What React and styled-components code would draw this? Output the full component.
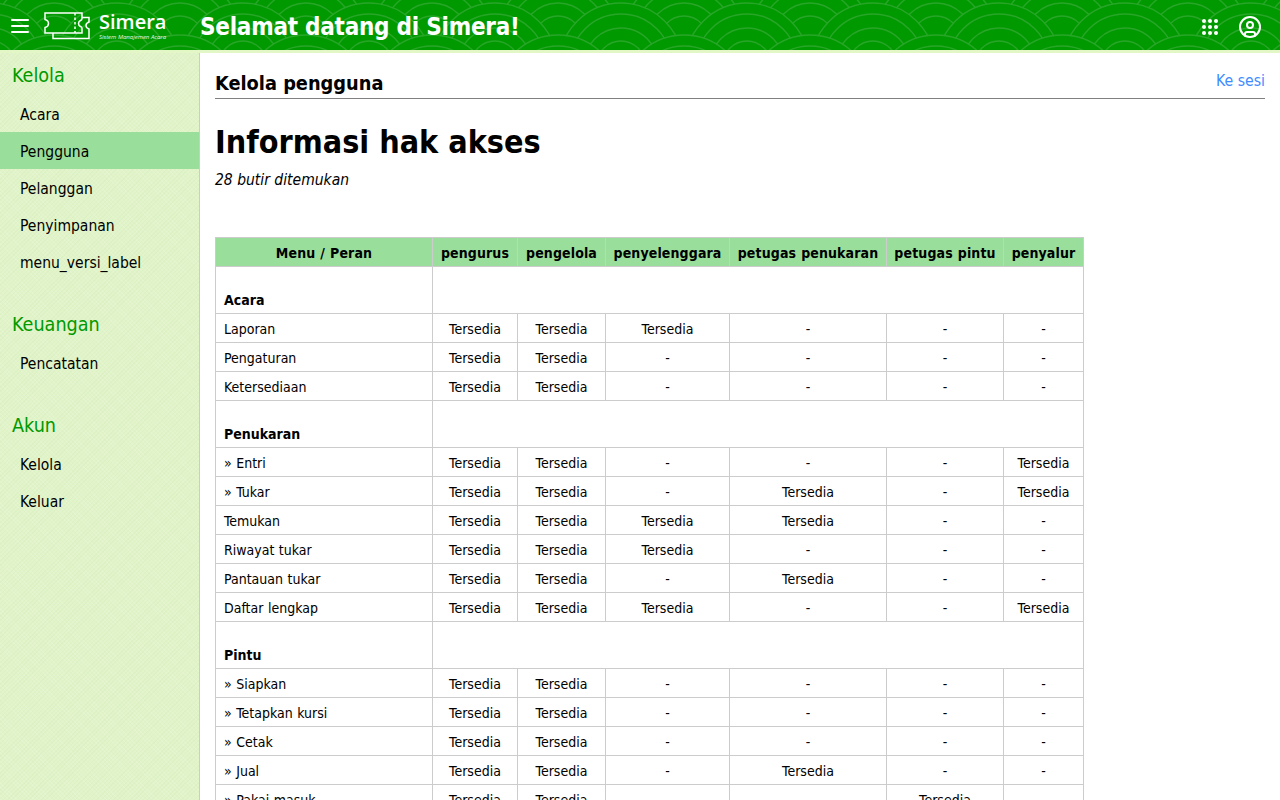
import styled, { createGlobalStyle } from "styled-components";
import { LuMenu, LuCircleUser } from "react-icons/lu";

const GlobalStyle = createGlobalStyle`
  html, body { margin: 0; padding: 0; height: 100%; overflow: hidden; background: #fff; }
  body {
    font-family: "DejaVu Sans Condensed", "DejaVu Sans", sans-serif;
    font-stretch: condensed;
    font-size: 14px;
    color: #000;
  }
`;

const sidebarMenu = [
  { title: "Kelola", items: ["Acara", "Pengguna", "Pelanggan", "Penyimpanan", "menu_versi_label"] },
  { title: "Keuangan", items: ["Pencatatan"] },
  { title: "Akun", items: ["Kelola", "Keluar"] },
];

const columns = [
  { label: "Menu / Peran", width: 217 },
  { label: "pengurus", width: 85 },
  { label: "pengelola", width: 88 },
  { label: "penyelenggara", width: 124 },
  { label: "petugas penukaran", width: 157 },
  { label: "petugas pintu", width: 117 },
  { label: "penyalur", width: 80 },
];

const T = "Tersedia";
const rows = [
  { group: "Acara" },
  { name: "Laporan", v: [T, T, T, "-", "-", "-"] },
  { name: "Pengaturan", v: [T, T, "-", "-", "-", "-"] },
  { name: "Ketersediaan", v: [T, T, "-", "-", "-", "-"] },
  { group: "Penukaran" },
  { name: "» Entri", v: [T, T, "-", "-", "-", T] },
  { name: "» Tukar", v: [T, T, "-", T, "-", T] },
  { name: "Temukan", v: [T, T, T, T, "-", "-"] },
  { name: "Riwayat tukar", v: [T, T, T, "-", "-", "-"] },
  { name: "Pantauan tukar", v: [T, T, "-", T, "-", "-"] },
  { name: "Daftar lengkap", v: [T, T, T, "-", "-", T] },
  { group: "Pintu" },
  { name: "» Siapkan", v: [T, T, "-", "-", "-", "-"] },
  { name: "» Tetapkan kursi", v: [T, T, "-", "-", "-", "-"] },
  { name: "» Cetak", v: [T, T, "-", "-", "-", "-"] },
  { name: "» Jual", v: [T, T, "-", T, "-", "-"] },
  { name: "» Pakai masuk", v: [T, T, "-", "-", T, "-"] },
];

// scale rows of the header pattern, back to front
const scaleRows = [
  { x: 54, cy: 40 },
  { x: 117, cy: 65 },
  { x: 54, cy: 97 },
];

const Page = styled.div`
  height: 100vh;
  display: flex;
  flex-direction: column;
  overflow: hidden;
`;

const Header = styled.header`
  position: relative;
  flex: none;
  height: 50px;
  background: #009900;
  border-bottom: 3px solid #e2f6c6;
  display: flex;
  align-items: center;
  color: #fff;
  overflow: hidden;
`;

const PatternLayer = styled.svg`
  position: absolute;
  inset: 0;
  width: 100%;
  height: 100%;
`;

const HeaderContent = styled.div`
  position: relative;
  flex: 1;
  display: flex;
  align-items: center;
  height: 100%;
  padding-top: 4px;
  box-sizing: border-box;
`;

const MenuButton = styled.div`
  width: 40px;
  margin-top: -2px;
  display: flex;
  justify-content: center;
  font-size: 24px;
  line-height: 0;
`;

const Logo = styled.div`
  display: flex;
  align-items: center;
  width: 157px;
  margin: -2px -4px 0 4px;
`;

const LogoText = styled.div`
  margin-left: 8px;
  display: flex;
  flex-direction: column;
`;

const LogoName = styled.span`
  font-family: "Open Sans", sans-serif;
  font-stretch: normal;
  font-weight: 600;
  font-size: 20px;
  line-height: 20px;
`;

const LogoSub = styled.span`
  margin-top: 1px;
  font-family: "Open Sans", sans-serif;
  font-stretch: normal;
  font-style: italic;
  font-size: 6px;
  line-height: 8px;
  white-space: nowrap;
  opacity: 0.9;
`;

const HeaderTitle = styled.h1`
  flex: 1;
  margin: 0 0 0 3px;
  font-size: 24px;
  letter-spacing: -0.25px;
  font-weight: 700;
`;

const HeaderIcons = styled.div`
  display: flex;
  align-items: center;
  gap: 20px;
  padding-right: 18px;
`;

const Body = styled.div`
  flex: 1;
  display: flex;
  min-height: 0;
`;

const Sidebar = styled.nav`
  flex: none;
  width: 199px;
  padding-top: 4px;
  border-right: 1px solid #cccccc;
  background-color: #e1f4c9;
  background-image:
    repeating-linear-gradient(45deg, rgba(255, 255, 255, 0.1) 0 1px, transparent 1px 3px),
    repeating-linear-gradient(-45deg, rgba(120, 170, 90, 0.05) 0 1px, transparent 1px 3px);
`;

const NavSection = styled.section`
  margin-bottom: 26px;
`;

const NavTitle = styled.h3`
  margin: 0;
  padding: 0 12px;
  height: 38px;
  line-height: 38px;
  font-size: 19.6px;
  font-weight: 400;
  color: #009900;
`;

const NavItem = styled.div`
  height: 37px;
  line-height: 40px;
  padding-left: 20px;
  font-size: 15.5px;
  background: ${(p) => (p.$active ? "#9ade9b" : "transparent")};
`;

const Main = styled.main`
  flex: 1;
  min-width: 0;
  padding: 14px 15px 0;
`;

const TopBar = styled.div`
  display: flex;
  justify-content: space-between;
  align-items: center;
  height: 31px;
  border-bottom: 1px solid #808080;
`;

const TopTitle = styled.h2`
  margin: 2px 0 0;
  font-size: 19.8px;
  font-weight: 700;
`;

const TopLink = styled.a`
  margin-bottom: 4px;
  font-size: 15.7px;
  color: #3f8cff;
`;

const Heading = styled.h1`
  margin: 23px 0 0;
  font-size: 32px;
  line-height: 40px;
  font-weight: 700;
`;

const Count = styled.p`
  margin: 8px 0 0;
  font-size: 15.5px;
  line-height: 20px;
  font-style: italic;
`;

const AccessTable = styled.table`
  margin-top: 47px;
  border-collapse: collapse;
  table-layout: fixed;
  width: 868px;
  font-size: 14px;
`;

const Col = styled.col`
  width: ${(p) => p.$w}px;
`;

const HeadCell = styled.th`
  height: 27px;
  padding: 1px 0 0;
  border: 1px solid #cccccc;
  background: #9ade9b;
  font-weight: 700;
  letter-spacing: 0.12px;
  word-spacing: 0.5px;
  text-align: center;
  white-space: nowrap;
`;

const Cell = styled.td`
  height: 27px;
  padding: 1px ${(p) => (p.$left ? "8px" : "0")} 0;
  border: 1px solid #cccccc;
  word-spacing: 0.5px;
  text-align: ${(p) => (p.$left ? "left" : "center")};
  white-space: nowrap;
`;

const GroupCell = styled(Cell)`
  padding-top: 19px;
  font-weight: 700;
`;

const TicketLogo = () => (
  <svg width="47" height="28" viewBox="0 0 47 28" fill="none" stroke="#fff" strokeWidth="1.5">
    <path d="M1 1H38V6.500Q38 8 36.500 8.500Q34.500 9.500 34.500 11.500Q34.500 13.500 36.500 14.500Q38 15 38 16.500V21H1V15.500Q4.500 14.500 4.500 11.500Q4.500 8.500 1 7.500Z" />
    <path d="M31 1V21" strokeDasharray="2.5 2" />
    <path d="M38 5.500H45V10Q42 11 42 13.500Q42 16 45 17V26.500H9V21" />
  </svg>
);

const GridDots = () => (
  <svg width="16" height="16" viewBox="0 0 16 16" fill="#fff">
    {[2, 8, 14].flatMap((y) =>
      [2, 8, 14].map((x) => <circle key={`${x}-${y}`} cx={x} cy={y} r="2" />)
    )}
  </svg>
);

const App = () => {
  return (
    <Page>
      <GlobalStyle />
      <Header>
        <PatternLayer aria-hidden="true">
          <defs>
            <pattern id="waves" width="126" height="50" patternUnits="userSpaceOnUse">
              {scaleRows.map((row, i) =>
                [-126, 0, 126].map((shift) => (
                  <g key={`${i}-${shift}`} fill="#009900" stroke="#28a628" strokeWidth="1.4">
                    {[62, 51, 37, 24].map((r) => (
                      <circle key={r} cx={row.x + shift} cy={row.cy} r={r} />
                    ))}
                  </g>
                ))
              )}
            </pattern>
          </defs>
          <rect width="100%" height="100%" fill="url(#waves)" />
        </PatternLayer>
        <HeaderContent>
          <MenuButton><LuMenu /></MenuButton>
          <Logo>
            <TicketLogo />
            <LogoText>
              <LogoName>Simera</LogoName>
              <LogoSub>Sistem Manajemen Acara</LogoSub>
            </LogoText>
          </Logo>
          <HeaderTitle>Selamat datang di Simera!</HeaderTitle>
          <HeaderIcons>
            <GridDots />
            <LuCircleUser size={24} />
          </HeaderIcons>
        </HeaderContent>
      </Header>
      <Body>
        <Sidebar>
          {sidebarMenu.map((section) => (
            <NavSection key={section.title}>
              <NavTitle>{section.title}</NavTitle>
              {section.items.map((item) => (
                <NavItem key={item} $active={item === "Pengguna"}>{item}</NavItem>
              ))}
            </NavSection>
          ))}
        </Sidebar>
        <Main>
          <TopBar>
            <TopTitle>Kelola pengguna</TopTitle>
            <TopLink>Ke sesi</TopLink>
          </TopBar>
          <Heading>Informasi hak akses</Heading>
          <Count>28 butir ditemukan</Count>
          <AccessTable>
            <colgroup>
              {columns.map((col) => <Col key={col.label} $w={col.width} />)}
            </colgroup>
            <thead>
              <tr>
                {columns.map((col) => <HeadCell key={col.label}>{col.label}</HeadCell>)}
              </tr>
            </thead>
            <tbody>
              {rows.map((row) =>
                row.group ? (
                  <tr key={row.group}>
                    <GroupCell $left>{row.group}</GroupCell>
                    <Cell colSpan={6} />
                  </tr>
                ) : (
                  <tr key={row.name}>
                    <Cell $left>{row.name}</Cell>
                    {row.v.map((val, i) => <Cell key={i}>{val}</Cell>)}
                  </tr>
                )
              )}
            </tbody>
          </AccessTable>
        </Main>
      </Body>
    </Page>
  );
};

export default App;
